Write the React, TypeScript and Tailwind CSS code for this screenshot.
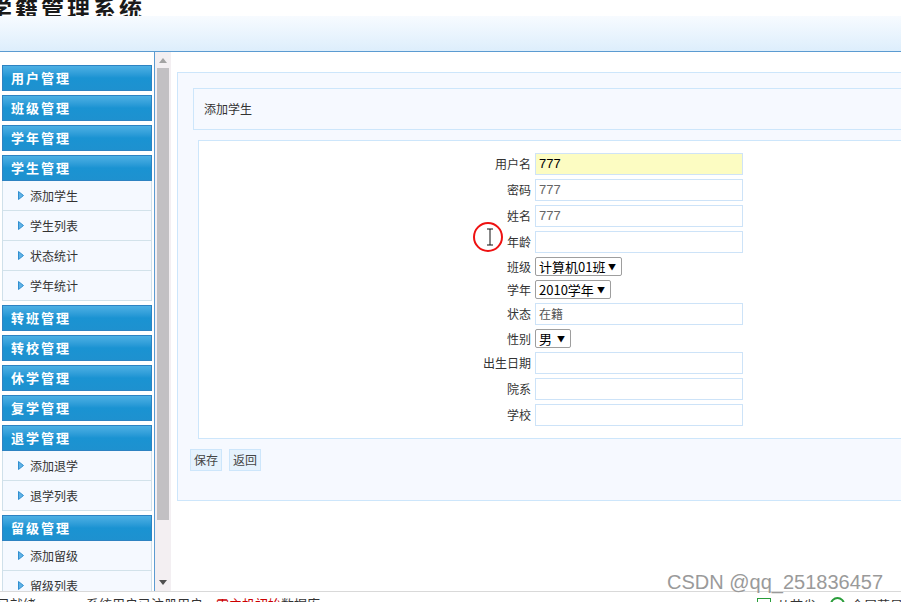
import React from "react";

const CJK = "font-['Noto_Sans_CJK_SC',sans-serif]";

type Group = { title: string; items?: string[] };

const menu: Group[] = [
  { title: "用户管理" },
  { title: "班级管理" },
  { title: "学年管理" },
  { title: "学生管理", items: ["添加学生", "学生列表", "状态统计", "学年统计"] },
  { title: "转班管理" },
  { title: "转校管理" },
  { title: "休学管理" },
  { title: "复学管理" },
  { title: "退学管理", items: ["添加退学", "退学列表"] },
  { title: "留级管理", items: ["添加留级", "留级列表"] },
];

const Arrow = () => (
  <svg width="6" height="9" viewBox="0 0 6 9" className="shrink-0">
    <polygon points="0.5,0.5 5.5,4.5 0.5,8.5" fill="#5fb2e6" stroke="#2f8fd0" strokeWidth="1" />
  </svg>
);

const Sidebar = () => (
  <div className="w-[155px] shrink-0 border-r border-[#5b9bd1] bg-white pt-[13px] overflow-hidden">
    {menu.map((g) => (
      <div key={g.title} className="mb-[4px] mx-[2px] w-[150px]">
        <div className="h-[26px] flex items-center pl-[8px] border border-[#2d83c2] bg-gradient-to-b from-[#4cb0e4] via-[#1a93d2] to-[#1e91cf] text-white font-bold text-[13px] tracking-[2px]">
          {g.title}
        </div>
        {g.items && (
          <div className="border-x border-[#cfe0ea] bg-[#f5f9ff]">
            {g.items.map((it) => (
              <div key={it} className="h-[30px] flex items-center gap-[6px] pl-[15px] border-b border-[#d2e2ea] text-[12px] text-[#333]">
                <Arrow />
                <span>{it}</span>
              </div>
            ))}
          </div>
        )}
      </div>
    ))}
  </div>
);

const Scrollbar = () => (
  <div className="w-[16px] shrink-0 bg-[#f3eff2] flex flex-col items-center">
    <div className="h-[16px] flex items-center justify-center">
      <svg width="8" height="5" viewBox="0 0 8 5"><polygon points="0,5 4,0 8,5" fill="#a3a3a3" /></svg>
    </div>
    <div className="w-[12px] h-[452px] bg-[#c2c0c3]" />
    <div className="flex-1" />
    <div className="h-[16px] flex items-center justify-center mb-[1px]">
      <svg width="8" height="5" viewBox="0 0 8 5"><polygon points="0,0 8,0 4,5" fill="#505050" /></svg>
    </div>
  </div>
);

const TextInput = ({ value, highlight }: { value?: string; highlight?: boolean }) => (
  <div
    className={
      "w-[208px] h-[22px] border flex items-center pl-[3px] text-[13px] font-['Liberation_Sans',sans-serif] " +
      (highlight ? "bg-[#fcfcc2] border-[#cfe3f7] text-black" : "bg-white border-[#cde3f8] text-[#666]")
    }
  >
    {value}
  </div>
);

const Select = ({ value, width }: { value: string; width: string }) => (
  <div className={"h-[19px] border border-[#9e9e9e] rounded-[2px] bg-white flex items-center justify-between pl-[3px] pr-[5px] text-[13px] text-black " + width}>
    <span>{value}</span>
    <span className="text-[8px] leading-none">▼</span>
  </div>
);

type Row = { label: string; node: React.ReactNode };

const rows: Row[] = [
  { label: "用户名", node: <TextInput value="777" highlight /> },
  { label: "密码", node: <TextInput value="777" /> },
  { label: "姓名", node: <TextInput value="777" /> },
  { label: "年龄", node: <TextInput /> },
  { label: "班级", node: <Select value="计算机01班" width="w-[87px]" /> },
  { label: "学年", node: <Select value="2010学年" width="w-[76px]" /> },
  {
    label: "状态",
    node: (
      <div className="w-[208px] h-[22px] border border-[#cde3f8] bg-white flex items-center pl-[3px] text-[12px] text-[#555]">
        在籍
      </div>
    ),
  },
  { label: "性别", node: <Select value="男" width="w-[36px]" /> },
  { label: "出生日期", node: <TextInput /> },
  { label: "院系", node: <TextInput /> },
  { label: "学校", node: <TextInput /> },
];

const Main = () => (
  <div className="flex-1 overflow-hidden pl-[6px] pt-[20px]">
    <div className="w-[760px] h-[429px] border border-[#cde6fb] bg-[#f6f9ff] pt-[15px]">
      <div className="ml-[15px] h-[42px] border border-[#cde6fb] flex items-center pl-[10px] text-[12px] text-[#333]">
        添加学生
      </div>
      <div className="ml-[20px] mt-[10px] h-[299px] border border-[#cde6fb] bg-white pt-[12px] flex flex-col gap-[4px]">
        {rows.map((r) => (
          <div key={r.label} className="flex items-center">
            <div className="w-[336px] pr-[4px] text-right text-[12px] text-[#333]">{r.label}</div>
            {r.node}
          </div>
        ))}
      </div>
      <div className="ml-[12px] mt-[10px] flex gap-[7px]">
        <div className="w-[32px] h-[22px] border border-[#cde6fb] bg-[#e6f2fd] flex items-center justify-center text-[12px] text-[#444]">保存</div>
        <div className="w-[32px] h-[22px] border border-[#cde6fb] bg-[#e6f2fd] flex items-center justify-center text-[12px] text-[#444]">返回</div>
      </div>
    </div>
  </div>
);

export default function App() {
  return (
    <div className={"relative w-[901px] h-[602px] overflow-hidden bg-white " + CJK}>
      {/* header */}
      <div className="h-[16px] overflow-hidden">
        <div className="-ml-[11px] -mt-[7px] text-[23px] font-bold tracking-[3px] text-[#1a1a1a] leading-[30px] whitespace-nowrap">
          学籍管理系统
        </div>
      </div>
      <div className="h-[36px] border-b border-[#5b9bd1] bg-gradient-to-b from-[#f7fbff] to-[#ddeefc]" />

      <div className="flex h-[539px]">
        <Sidebar />
        <Scrollbar />
        <Main />
      </div>

      {/* status bar */}
      <div className="h-[11px] border-t border-[#d9d9d9] bg-white overflow-hidden relative text-[13px] text-[#333] whitespace-nowrap">
        <div className="absolute left-[-3px] top-[2px] flex gap-[50px]">
          <span>已就绪</span>
          <span>
            系统用户已注册用户，<span className="text-[#c00]">需主机初始</span>数据库
          </span>
        </div>
        <div className="absolute left-[757px] top-[3px] flex items-center gap-[6px]">
          <span className="w-[14px] h-[14px] border border-[#2a9d3a]" />
          <span>从节省</span>
          <span className="w-[15px] h-[15px] rounded-full border-2 border-[#2a9d3a] ml-[8px]" />
          <span>全屏幕显示</span>
        </div>
      </div>

      {/* cursor highlight from screen capture */}
      <svg className="absolute left-[472px] top-[221px]" width="32" height="32" viewBox="0 0 32 32">
        <circle cx="16" cy="16" r="14" fill="none" stroke="#ee1111" strokeWidth="2" />
        <path d="M15 8 L21 8 M18 8 L18 24 M15 24 L21 24" stroke="#111" strokeWidth="1" fill="none" />
      </svg>

      {/* watermark */}
      <div className="absolute left-[667px] top-[570px] text-[20px] leading-[24px] text-[#9a9a9a] font-['Liberation_Sans',sans-serif]">
        CSDN @qq_251836457
      </div>
    </div>
  );
}
